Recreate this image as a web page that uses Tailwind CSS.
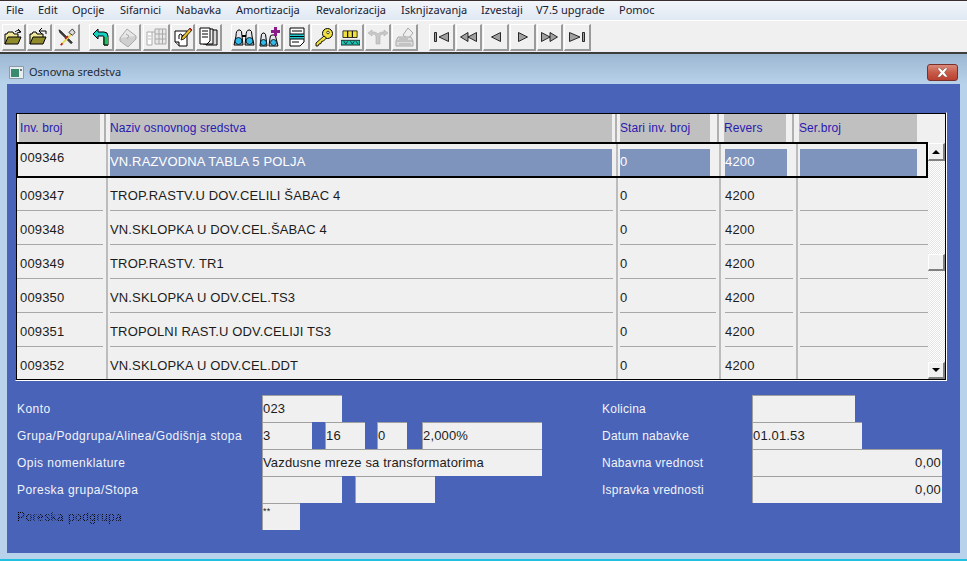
<!DOCTYPE html>
<html lang="sr">
<head>
  <meta charset="UTF-8">
  <title>Osnovna sredstva</title>
  <script src="https://cdn.jsdelivr.net/npm/@tailwindcss/browser@4"></script>
</head>
<body class="w-[967px] h-[561px] overflow-hidden bg-[#b9d2ec] font-['Liberation_Sans',Arial,sans-serif] text-[12px] text-black">

  <!-- menu -->
  <div class="h-[20px] flex items-center pl-[6px] border-t border-[#3a3030] bg-gradient-to-b from-[#f3f6fa] to-[#dfe8f3] text-[#1a2030] font-['Noto_Sans',sans-serif] text-[11px]">
    <span class="w-[32px]">File</span>
    <span class="w-[34px]">Edit</span>
    <span class="w-[48px]">Opcije</span>
    <span class="w-[56px]">Sifarnici</span>
    <span class="w-[60px]">Nabavka</span>
    <span class="w-[80px]">Amortizacija</span>
    <span class="w-[85px]">Revalorizacija</span>
    <span class="w-[80px]">Isknjizavanja</span>
    <span class="w-[55px]">Izvestaji</span>
    <span class="w-[83px]">V7.5 upgrade</span>
    <span>Pomoc</span>
  </div>

  <!-- toolbar -->
  <div class="h-[34px] flex items-center pl-[2px] pt-[2px] bg-[#f0f0f0] border-t border-white border-b-2 border-b-[#3c3c3c]">
    <div class="flex gap-[1px]">
      <button class="w-[24px] h-[27px] flex items-center justify-center bg-[#f0f0f0] border-t border-l border-white border-r-2 border-b-2 border-r-[#9a9a9a] border-b-[#9a9a9a]">
        <svg width="20" height="18" viewBox="0 0 20 18"><path d="M1 16V6h2l1-2h5l1 2h4v3" fill="#f2e89a" stroke="#000"/><path d="M1 16l3-7h13l-3 7z" fill="#8f8a2c" stroke="#000"/><path d="M11 4c2-2 4-2 5 0M14 1l3 3-4 1" fill="none" stroke="#000"/></svg>
      </button>
      <button class="w-[25px] h-[27px] flex items-center justify-center bg-[#f0f0f0] border-t border-l border-white border-r-2 border-b-2 border-r-[#9a9a9a] border-b-[#9a9a9a]">
        <svg width="20" height="18" viewBox="0 0 20 18"><path d="M1 16V6h2l1-2h3l1 2h6v3" fill="#f2e89a" stroke="#000"/><path d="M1 16l3-7h13l-3 7z" fill="#8f8a2c" stroke="#000"/><path d="M17 6V3h-6M13 0l-3 3 3 3" fill="none" stroke="#000"/></svg>
      </button>
      <button class="w-[26px] h-[27px] ml-[1px] flex items-center justify-center bg-[#f0f0f0] border-t border-l border-white border-r-2 border-b-2 border-r-[#9a9a9a] border-b-[#9a9a9a]">
        <svg width="18" height="18" viewBox="0 0 20 20"><path d="M1 2l2 1 13 13-1.500 1.500L2 5z" fill="#3a3a3a" stroke="#000" stroke-width=".6"/><path d="M16 6L4 18" stroke="#e8d850" stroke-width="2"/><path d="M3 19l2-2M11 9l-3 3" stroke="#c02020" stroke-width="2"/><path d="M12 5l4-4 3 4-3 3z" fill="#ddd" stroke="#000" stroke-width=".8"/></svg>
      </button>
    </div>
    <div class="flex gap-[1px] ml-[9px]">
      <button class="w-[25px] h-[27px] flex items-center justify-center bg-[#f0f0f0] border-t border-l border-white border-r-2 border-b-2 border-r-[#9a9a9a] border-b-[#9a9a9a]">
        <svg width="18" height="20" viewBox="0 0 18 20"><path d="M1 7l5-5v3h6q4 0 4 4v9h-4V10q0-1-1-1H6v3z" fill="#18d0c0" stroke="#000"/><path d="M12 10h4v8h-4z" fill="#20c060"/><path d="M12 18V10M16 18h-4" stroke="#000" fill="none"/></svg>
      </button>
      <button class="w-[26px] h-[27px] flex items-center justify-center bg-[#f0f0f0] border-t border-l border-white border-r-2 border-b-2 border-r-[#9a9a9a] border-b-[#9a9a9a]">
        <svg width="20" height="20" viewBox="0 0 20 20"><path d="M9 2l9 7-8 8-8-6z" fill="#e6e6e6" stroke="#a8a8a8"/><path d="M2 11v3l8 6 8-8V9" fill="#cfcfcf" stroke="#a8a8a8"/><path d="M8 7l3 2-2 3" fill="none" stroke="#a8a8a8"/></svg>
      </button>
      <button class="w-[27px] h-[27px] ml-[1px] flex items-center justify-center bg-[#f0f0f0] border-t border-l border-white border-r-2 border-b-2 border-r-[#9a9a9a] border-b-[#9a9a9a]">
        <svg width="21" height="19" viewBox="0 0 21 19"><path d="M1 4h19M1 4v13h5V4" fill="#fff" stroke="#aaa"/><path d="M9 1h11v15H9zM9 6h11M9 11h11M13 1v15M16.500 1v15" fill="#e8e8e8" stroke="#a8a8a8"/><path d="M2 8h3M2 11h3" stroke="#bbb"/></svg>
      </button>
    </div>
    <div class="flex gap-[1px] ml-[1px]">
      <button class="w-[24px] h-[27px] flex items-center justify-center bg-[#f0f0f0] border-t border-l border-white border-r-2 border-b-2 border-r-[#9a9a9a] border-b-[#9a9a9a]">
        <svg width="20" height="20" viewBox="0 0 20 20"><path d="M2 4h12v15H6l-4-4z" fill="#fff" stroke="#000"/><path d="M2 15h4v4" fill="#ccc" stroke="#000"/><path d="M6 12V8M6 8q2-2 3 0v3M9 9q2-2 3 0" fill="none" stroke="#000"/><path d="M9 10l8-9 2 2-8 9-3 1z" fill="#e8c030" stroke="#000" stroke-width=".8"/><path d="M16 2l1-1 2 2-1 1z" fill="#d02020"/></svg>
      </button>
      <button class="w-[26px] h-[27px] flex items-center justify-center bg-[#f0f0f0] border-t border-l border-white border-r-2 border-b-2 border-r-[#9a9a9a] border-b-[#9a9a9a]">
        <svg width="20" height="20" viewBox="0 0 20 20"><path d="M7 3h11v15H7z" fill="#d8d8d8" stroke="#000"/><path d="M4 2h10v15H4z" fill="#eee" stroke="#000"/><path d="M1 1h10v13l-3 3H1z" fill="#fff" stroke="#000"/><path d="M3 4h6M3 7h6M3 10h6" stroke="#000"/></svg>
      </button>
    </div>
    <div class="flex gap-[1px] ml-[9px]">
      <button class="w-[26px] h-[27px] flex items-center justify-center bg-[#f0f0f0] border-t border-l border-white border-r-2 border-b-2 border-r-[#9a9a9a] border-b-[#9a9a9a]">
        <svg width="22" height="19" viewBox="0 0 22 19"><path d="M3 8q0-6 3-6h1q2 0 2 6l1 9H1z" fill="#e4e4ea" stroke="#000"/><path d="M13 8q0-6 3-6h1q2 0 2 6l2 9H12z" fill="#e4e4ea" stroke="#000"/><circle cx="5.500" cy="13" r="3.500" fill="#30b8e8" stroke="#000" stroke-width=".8"/><circle cx="16.500" cy="13" r="3.500" fill="#30b8e8" stroke="#000" stroke-width=".8"/><path d="M9 8h4" stroke="#000" stroke-width="2"/></svg>
      </button>
      <button class="w-[25px] h-[27px] flex items-center justify-center bg-[#f0f0f0] border-t border-l border-white border-r-2 border-b-2 border-r-[#9a9a9a] border-b-[#9a9a9a]">
        <svg width="22" height="21" viewBox="0 0 22 21"><path d="M2 11q0-5 2-5h1q2 0 2 5l1 8H1z" fill="#e4e4ea" stroke="#000"/><path d="M11 11q0-3 2-3h2q2 0 2 3l2 8h-9z" fill="#e4e4ea" stroke="#000"/><circle cx="4.500" cy="15.500" r="3" fill="#30b8e8" stroke="#000" stroke-width=".8"/><circle cx="14.500" cy="15.500" r="3" fill="#30b8e8" stroke="#000" stroke-width=".8"/><path d="M15 0h3v3h3v3h-3v3h-3V6h-3V3h3z" fill="#8a1a8a"/></svg>
      </button>
      <button class="w-[26px] h-[27px] flex items-center justify-center bg-[#f0f0f0] border-t border-l border-white border-r-2 border-b-2 border-r-[#9a9a9a] border-b-[#9a9a9a]">
        <svg width="18" height="20" viewBox="0 0 18 20"><path d="M2 1h14v14l-4 4H2z" fill="#fff" stroke="#000"/><path d="M2 7h14v5H2z" fill="#20c8d0"/><path d="M4 4h10M2 7h14M2 9.500h14M2 12h14M4 15h7" stroke="#000"/></svg>
      </button>
      <button class="w-[26px] h-[27px] flex items-center justify-center bg-[#f0f0f0] border-t border-l border-white border-r-2 border-b-2 border-r-[#9a9a9a] border-b-[#9a9a9a]">
        <svg width="20" height="20" viewBox="0 0 20 20"><circle cx="13.500" cy="6.500" r="5" fill="#f0e040" stroke="#000"/><circle cx="14" cy="5.500" r="1.300" fill="#fff" stroke="#000" stroke-width=".7"/><path d="M10 9l-8 7v3h2l1-2 2-.5.500-2 2-.5 3-3z" fill="#f0e040" stroke="#000" stroke-width=".9"/></svg>
      </button>
      <button class="w-[26px] h-[27px] flex items-center justify-center bg-[#f0f0f0] border-t border-l border-white border-r-2 border-b-2 border-r-[#9a9a9a] border-b-[#9a9a9a]">
        <svg width="19" height="17" viewBox="0 0 20 18"><path d="M2 2h5v7H2zM7 2h5v7H7zM12 2h5v7h-5z" fill="#f0e040" stroke="#000" stroke-width=".8"/><path d="M0 12h20v5H0z" fill="#20c0b0" stroke="#000" stroke-width=".8"/><path d="M3 13l2 3M7 13l-2 3M10 13l2 3M14 13l-2 3M16 13l2 3" stroke="#000" stroke-width=".7"/></svg>
      </button>
      <button class="w-[26px] h-[27px] flex items-center justify-center bg-[#f0f0f0] border-t border-l border-white border-r-2 border-b-2 border-r-[#9a9a9a] border-b-[#9a9a9a]">
        <svg width="20" height="16" viewBox="0 0 20 16"><path d="M8 15V8Q8 5 5 5H4V7L0 4 4 1v2h2q2 0 4 2 2-2 4-2h2V1l4 3-4 3V5h-1q-3 0-3 3v7z" fill="#c8c8c8" stroke="#b0b0b0" stroke-width=".6"/></svg>
      </button>
      <button class="w-[26px] h-[27px] flex items-center justify-center bg-[#f0f0f0] border-t border-l border-white border-r-2 border-b-2 border-r-[#9a9a9a] border-b-[#9a9a9a]">
        <svg width="20" height="20" viewBox="0 0 20 20"><path d="M8 8l5-7 5 5-5 6z" fill="#eee" stroke="#a8a8a8"/><path d="M3 10h13l2 4v5H1v-5z" fill="#ddd" stroke="#a8a8a8"/><path d="M2 14h16M4 12h9M4 17h12" stroke="#a8a8a8"/></svg>
      </button>
    </div>
    <div class="flex gap-[1px] ml-[11px]">
      <button class="w-[26px] h-[27px] flex items-center justify-center bg-[#f0f0f0] border-t border-l border-white border-r-2 border-b-2 border-r-[#9a9a9a] border-b-[#9a9a9a]">
        <svg width="16" height="10" viewBox="0 0 16 10"><path d="M.5.500h2v9h-2zM14.500.500v9L5 5z" fill="#a0a0a0" stroke="#000" stroke-width=".8"/></svg>
      </button>
      <button class="w-[26px] h-[27px] flex items-center justify-center bg-[#f0f0f0] border-t border-l border-white border-r-2 border-b-2 border-r-[#9a9a9a] border-b-[#9a9a9a]">
        <svg width="17" height="10" viewBox="0 0 17 10"><path d="M8 .500v9L.5 5zM16.500.500v9L8 5z" fill="#a0a0a0" stroke="#000" stroke-width=".8"/></svg>
      </button>
      <button class="w-[26px] h-[27px] flex items-center justify-center bg-[#f0f0f0] border-t border-l border-white border-r-2 border-b-2 border-r-[#9a9a9a] border-b-[#9a9a9a]">
        <svg width="10" height="10" viewBox="0 0 10 10"><path d="M9.500.500v9L.5 5z" fill="#a0a0a0" stroke="#000" stroke-width=".8"/></svg>
      </button>
      <button class="w-[26px] h-[27px] flex items-center justify-center bg-[#f0f0f0] border-t border-l border-white border-r-2 border-b-2 border-r-[#9a9a9a] border-b-[#9a9a9a]">
        <svg width="10" height="10" viewBox="0 0 10 10"><path d="M.5.500v9L9.500 5z" fill="#a0a0a0" stroke="#000" stroke-width=".8"/></svg>
      </button>
      <button class="w-[26px] h-[27px] flex items-center justify-center bg-[#f0f0f0] border-t border-l border-white border-r-2 border-b-2 border-r-[#9a9a9a] border-b-[#9a9a9a]">
        <svg width="17" height="10" viewBox="0 0 17 10"><path d="M.5.500v9L9 5zM9 .500v9L16.500 5z" fill="#a0a0a0" stroke="#000" stroke-width=".8"/></svg>
      </button>
      <button class="w-[27px] h-[27px] flex items-center justify-center bg-[#f0f0f0] border-t border-l border-white border-r-2 border-b-2 border-r-[#9a9a9a] border-b-[#9a9a9a]">
        <svg width="16" height="10" viewBox="0 0 16 10"><path d="M.5.500v9L11 5zM13.500.500h2v9h-2z" fill="#a0a0a0" stroke="#000" stroke-width=".8"/></svg>
      </button>
    </div>
  </div>

  <!-- window -->
  <div class="h-[505px] flex flex-col px-[7px] bg-gradient-to-b from-[#9cb7d1] to-[#b9d2ec] to-[6%]">
    <div class="h-[30px] shrink-0 flex items-center -mx-[7px] pl-[9px] pr-[9px] pt-[7px]">
      <svg width="15" height="13" viewBox="0 0 15 13"><path d="M.5.500h14v12H.5z" fill="#e8eef0" stroke="#8a9aa8"/><path d="M2 3h8v8H2z" fill="#3a8a70"/><path d="M12 3v2" stroke="#000"/></svg>
      <span class="ml-[5px] text-[#1c2a3a] font-['Noto_Sans',sans-serif] text-[11px]">Osnovna sredstva</span>
      <div class="ml-auto w-[31px] h-[17px] flex items-center justify-center rounded-[3px] border border-[#7a3028] bg-gradient-to-b from-[#d88a7a] via-[#c85a48] to-[#b84030]">
        <svg width="13" height="9" viewBox="0 0 13 9"><path d="M1 0h3l2.500 2.500L9 0h3L8.500 4.500 12 9H9L6.500 6.500 4 9H1l3.500-4.500z" fill="#fff" stroke="#6a3a30" stroke-width=".5"/></svg>
      </div>
    </div>

    <div class="h-[469px] shrink-0 bg-[#4863b7] pt-[28px]">
      <!-- grid -->
      <div class="ml-[8px] w-[932px] h-[269px] border border-l-[#4863b7] border-t-[#4863b7] border-r-white border-b-white">
        <div class="h-full border border-black bg-[#f0f0f0] flex flex-col overflow-hidden">
          <!-- header -->
          <div class="h-[29px] shrink-0 flex text-[#2a1ab0] tracking-[0.08px]">
            <div class="w-[91px] h-[28px] flex"><div class="ml-[2px] w-[81px] bg-[#c0c0c0] flex items-center pl-[1px]">Inv. broj</div><div class="ml-[4px] w-[2px] bg-[#b0b0b0]"></div></div>
            <div class="w-[510px] h-[28px] flex"><div class="ml-[2px] w-[502px] bg-[#c0c0c0] flex items-center">Naziv osnovnog sredstva</div><div class="ml-[3px] w-[2px] bg-[#b0b0b0]"></div></div>
            <div class="w-[102px] h-[28px] flex"><div class="ml-[2px] w-[90px] bg-[#c0c0c0] flex items-center">Stari inv. broj</div><div class="ml-[7px] w-[2px] bg-[#b0b0b0]"></div></div>
            <div class="w-[77px] h-[28px] flex"><div class="ml-[4px] w-[62px] bg-[#c0c0c0] flex items-center">Revers</div><div class="ml-[6px] w-[2px] bg-[#b0b0b0]"></div></div>
            <div class="w-[120px] h-[28px] flex"><div class="ml-[2px] w-[118px] bg-[#c0c0c0] flex items-center">Ser.broj</div></div>
          </div>

          <div class="flex-1 flex min-h-0">
            <!-- rows -->
            <div class="w-[911px] text-[13px] text-[#1c1c1c] tracking-[0.15px]">
              <div class="relative h-[34px] flex">
                <div class="w-[91px] border-r-2 border-[#bcbcbc] pl-[3px] pt-[8px] leading-[14px]">009346</div>
                <div class="w-[510px] border-r-2 border-[#bcbcbc] pt-[6px] pl-[2px] pr-[4px]"><div class="h-[28px] pb-[2px] bg-[#7f94bd] text-white flex items-center">VN.RAZVODNA TABLA 5 POLJA</div></div>
                <div class="w-[103px] border-r-2 border-[#bcbcbc] pt-[6px] pl-[2px] pr-[9px]"><div class="h-[28px] pb-[2px] bg-[#7f94bd] text-white flex items-center">0</div></div>
                <div class="w-[77px] border-r-2 border-[#bcbcbc] pt-[6px] pl-[4px] pr-[9px]"><div class="h-[28px] pb-[2px] bg-[#7f94bd] text-white flex items-center">4200</div></div>
                <div class="w-[130px] pt-[6px] pl-[2px] pr-[11px]"><div class="h-[28px] bg-[#7f94bd]"></div></div>
                <div class="absolute -top-[1px] -bottom-[1px] -left-[1px] -right-0 border-2 border-black pointer-events-none"></div>
              </div>

              <div class="h-[34px] flex">
                <div class="w-[91px] border-r-2 border-[#bcbcbc]"><div class="h-full mr-[3px] pl-[3px] pt-[5px] flex items-center border-b border-[#a8a8a8]">009347</div></div>
                <div class="w-[510px] border-r-2 border-[#bcbcbc]"><div class="h-full ml-[2px] mr-[3px] pt-[5px] flex items-center border-b border-[#a8a8a8]">TROP.RASTV.U DOV.CELILI ŠABAC 4</div></div>
                <div class="w-[103px] border-r-2 border-[#bcbcbc]"><div class="h-full ml-[2px] mr-[3px] pt-[5px] flex items-center border-b border-[#a8a8a8]">0</div></div>
                <div class="w-[77px] border-r-2 border-[#bcbcbc]"><div class="h-full ml-[4px] mr-[3px] pt-[5px] flex items-center border-b border-[#a8a8a8]">4200</div></div>
                <div class="w-[130px]"><div class="h-full ml-[2px] border-b border-[#a8a8a8]"></div></div>
              </div>
              <div class="h-[34px] flex">
                <div class="w-[91px] border-r-2 border-[#bcbcbc]"><div class="h-full mr-[3px] pl-[3px] pt-[5px] flex items-center border-b border-[#a8a8a8]">009348</div></div>
                <div class="w-[510px] border-r-2 border-[#bcbcbc]"><div class="h-full ml-[2px] mr-[3px] pt-[5px] flex items-center border-b border-[#a8a8a8]">VN.SKLOPKA U DOV.CEL.ŠABAC 4</div></div>
                <div class="w-[103px] border-r-2 border-[#bcbcbc]"><div class="h-full ml-[2px] mr-[3px] pt-[5px] flex items-center border-b border-[#a8a8a8]">0</div></div>
                <div class="w-[77px] border-r-2 border-[#bcbcbc]"><div class="h-full ml-[4px] mr-[3px] pt-[5px] flex items-center border-b border-[#a8a8a8]">4200</div></div>
                <div class="w-[130px]"><div class="h-full ml-[2px] border-b border-[#a8a8a8]"></div></div>
              </div>
              <div class="h-[34px] flex">
                <div class="w-[91px] border-r-2 border-[#bcbcbc]"><div class="h-full mr-[3px] pl-[3px] pt-[5px] flex items-center border-b border-[#a8a8a8]">009349</div></div>
                <div class="w-[510px] border-r-2 border-[#bcbcbc]"><div class="h-full ml-[2px] mr-[3px] pt-[5px] flex items-center border-b border-[#a8a8a8]">TROP.RASTV. TR1</div></div>
                <div class="w-[103px] border-r-2 border-[#bcbcbc]"><div class="h-full ml-[2px] mr-[3px] pt-[5px] flex items-center border-b border-[#a8a8a8]">0</div></div>
                <div class="w-[77px] border-r-2 border-[#bcbcbc]"><div class="h-full ml-[4px] mr-[3px] pt-[5px] flex items-center border-b border-[#a8a8a8]">4200</div></div>
                <div class="w-[130px]"><div class="h-full ml-[2px] border-b border-[#a8a8a8]"></div></div>
              </div>
              <div class="h-[34px] flex">
                <div class="w-[91px] border-r-2 border-[#bcbcbc]"><div class="h-full mr-[3px] pl-[3px] pt-[5px] flex items-center border-b border-[#a8a8a8]">009350</div></div>
                <div class="w-[510px] border-r-2 border-[#bcbcbc]"><div class="h-full ml-[2px] mr-[3px] pt-[5px] flex items-center border-b border-[#a8a8a8]">VN.SKLOPKA U ODV.CEL.TS3</div></div>
                <div class="w-[103px] border-r-2 border-[#bcbcbc]"><div class="h-full ml-[2px] mr-[3px] pt-[5px] flex items-center border-b border-[#a8a8a8]">0</div></div>
                <div class="w-[77px] border-r-2 border-[#bcbcbc]"><div class="h-full ml-[4px] mr-[3px] pt-[5px] flex items-center border-b border-[#a8a8a8]">4200</div></div>
                <div class="w-[130px]"><div class="h-full ml-[2px] border-b border-[#a8a8a8]"></div></div>
              </div>
              <div class="h-[34px] flex">
                <div class="w-[91px] border-r-2 border-[#bcbcbc]"><div class="h-full mr-[3px] pl-[3px] pt-[5px] flex items-center border-b border-[#a8a8a8]">009351</div></div>
                <div class="w-[510px] border-r-2 border-[#bcbcbc]"><div class="h-full ml-[2px] mr-[3px] pt-[5px] flex items-center border-b border-[#a8a8a8]">TROPOLNI RAST.U ODV.CELIJI TS3</div></div>
                <div class="w-[103px] border-r-2 border-[#bcbcbc]"><div class="h-full ml-[2px] mr-[3px] pt-[5px] flex items-center border-b border-[#a8a8a8]">0</div></div>
                <div class="w-[77px] border-r-2 border-[#bcbcbc]"><div class="h-full ml-[4px] mr-[3px] pt-[5px] flex items-center border-b border-[#a8a8a8]">4200</div></div>
                <div class="w-[130px]"><div class="h-full ml-[2px] border-b border-[#a8a8a8]"></div></div>
              </div>
              <div class="h-[33px] flex">
                <div class="w-[91px] border-r-2 border-[#bcbcbc]"><div class="h-full mr-[3px] pl-[3px] pt-[5px] flex items-center">009352</div></div>
                <div class="w-[510px] border-r-2 border-[#bcbcbc]"><div class="h-full ml-[2px] mr-[3px] pt-[5px] flex items-center">VN.SKLOPKA U ODV.CEL.DDT</div></div>
                <div class="w-[103px] border-r-2 border-[#bcbcbc]"><div class="h-full ml-[2px] mr-[3px] pt-[5px] flex items-center">0</div></div>
                <div class="w-[77px] border-r-2 border-[#bcbcbc]"><div class="h-full ml-[4px] mr-[3px] pt-[5px] flex items-center">4200</div></div>
                <div class="w-[130px]"></div>
              </div>
            </div>

            <!-- scrollbar -->
            <div class="w-[17px] flex flex-col bg-[repeating-conic-gradient(#ffffff_0_25%,#e4e4e4_0_50%)] bg-[length:2px_2px]">
              <div class="h-[18px] flex items-center justify-center bg-[#f0f0f0] border-t border-l border-white border-r-2 border-b-2 border-r-[#808080] border-b-[#808080]">
                <svg width="8" height="4" viewBox="0 0 8 4"><path d="M4 0l4 4H0z" fill="#000"/></svg>
              </div>
              <div class="mt-[93px] h-[17px] bg-[#f0f0f0] border-t border-l border-white border-r-2 border-b-2 border-r-[#808080] border-b-[#808080]"></div>
              <div class="mt-auto h-[17px] flex items-center justify-center bg-[#f0f0f0] border-t border-l border-white border-r-2 border-b-2 border-r-[#808080] border-b-[#808080]">
                <svg width="8" height="4" viewBox="0 0 8 4"><path d="M0 0h8L4 4z" fill="#000"/></svg>
              </div>
            </div>
          </div>
        </div>
      </div>

      <!-- form -->
      <div class="mt-[14px] flex text-[13px] text-[#1c1c1c] tracking-[0.15px]">
        <div class="w-[595px] pl-[10px] shrink-0">
          <div class="h-[27px] flex items-center">
            <span class="w-[245px] text-[12px] tracking-[0.45px] text-[#f2f4fa]">Konto</span>
            <div class="w-[80px] h-full flex items-center bg-[#f0f0f0] border-t border-l border-[#a0a0a0]">023</div>
          </div>
          <div class="h-[27px] flex items-center">
            <span class="w-[245px] text-[12px] tracking-[0.45px] text-[#f2f4fa]">Grupa/Podgrupa/Alinea/Godišnja stopa</span>
            <div class="w-[50px] h-full flex items-center bg-[#f0f0f0] border-t border-l border-[#a0a0a0]">3</div>
            <div class="ml-[13px] w-[40px] h-full flex items-center bg-[#f0f0f0] border-t border-l border-[#a0a0a0]">16</div>
            <div class="ml-[12px] w-[30px] h-full flex items-center bg-[#f0f0f0] border-t border-l border-[#a0a0a0]">0</div>
            <div class="ml-[15px] w-[120px] h-full flex items-center bg-[#f0f0f0] border-t border-l border-[#a0a0a0]">2,000%</div>
          </div>
          <div class="h-[27px] flex items-center">
            <span class="w-[245px] text-[12px] tracking-[0.45px] text-[#f2f4fa]">Opis nomenklature</span>
            <div class="w-[280px] h-full flex items-center bg-[#f0f0f0] border-t border-l border-[#a0a0a0]">Vazdusne mreze sa transformatorima</div>
          </div>
          <div class="h-[27px] flex items-center">
            <span class="w-[245px] text-[12px] tracking-[0.45px] text-[#f2f4fa]">Poreska grupa/Stopa</span>
            <div class="w-[80px] h-full bg-[#f0f0f0] border-t border-l border-[#a0a0a0]"></div>
            <div class="ml-[13px] w-[80px] h-full bg-[#f0f0f0] border-t border-l border-[#a0a0a0]"></div>
          </div>
          <div class="h-[27px] flex items-center">
            <span class="w-[245px] text-[12px] tracking-[0.45px] bg-[repeating-conic-gradient(#000000_0_25%,transparent_0_50%)] bg-[length:2px_2px] bg-clip-text text-transparent">Poreska podgrupa</span>
            <div class="w-[38px] h-full text-[9px] leading-[14px] bg-[#f0f0f0] border-t border-l border-[#a0a0a0]">**</div>
          </div>
        </div>
        <div class="flex-1">
          <div class="h-[27px] flex items-center">
            <span class="w-[150px] text-[12px] tracking-[0.25px] text-[#f2f4fa]">Kolicina</span>
            <div class="w-[103px] h-full bg-[#f0f0f0] border-t border-l border-[#a0a0a0]"></div>
          </div>
          <div class="h-[27px] flex items-center">
            <span class="w-[150px] text-[12px] tracking-[0.25px] text-[#f2f4fa]">Datum nabavke</span>
            <div class="w-[110px] h-full flex items-center bg-[#f0f0f0] border-t border-l border-[#a0a0a0]">01.01.53</div>
          </div>
          <div class="h-[27px] flex items-center">
            <span class="w-[150px] text-[12px] tracking-[0.25px] text-[#f2f4fa]">Nabavna vrednost</span>
            <div class="w-[190px] h-full flex items-center justify-end pr-[1px] bg-[#f0f0f0] border-t border-l border-[#a0a0a0]">0,00</div>
          </div>
          <div class="h-[27px] flex items-center">
            <span class="w-[150px] text-[12px] tracking-[0.25px] text-[#f2f4fa]">Ispravka vrednosti</span>
            <div class="w-[190px] h-full flex items-center justify-end pr-[1px] bg-[#f0f0f0] border-t border-l border-[#a0a0a0]">0,00</div>
          </div>
        </div>
      </div>
    </div>
  </div>
  <div class="h-[2px] bg-[#20c0e0]"></div>
</body>
</html>
